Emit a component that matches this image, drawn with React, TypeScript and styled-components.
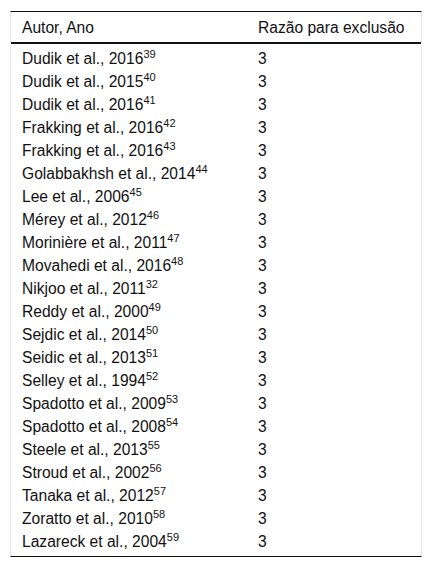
import React from 'react';
import styled, {createGlobalStyle} from "styled-components";

const rows: [string, string][] = [
    ['Dudik et al., 2016', '39'],
    ['Dudik et al., 2015', '40'],
    ['Dudik et al., 2016', '41'],
    ['Frakking et al., 2016', '42'],
    ['Frakking et al., 2016', '43'],
    ['Golabbakhsh et al., 2014', '44'],
    ['Lee et al., 2006', '45'],
    ['Mérey et al., 2012', '46'],
    ['Morinière et al., 2011', '47'],
    ['Movahedi et al., 2016', '48'],
    ['Nikjoo et al., 2011', '32'],
    ['Reddy et al., 2000', '49'],
    ['Sejdic et al., 2014', '50'],
    ['Seidic et al., 2013', '51'],
    ['Selley et al., 1994', '52'],
    ['Spadotto et al., 2009', '53'],
    ['Spadotto et al., 2008', '54'],
    ['Steele et al., 2013', '55'],
    ['Stroud et al., 2002', '56'],
    ['Tanaka et al., 2012', '57'],
    ['Zoratto et al., 2010', '58'],
    ['Lazareck et al., 2004', '59'],
];

export default function App() {
    return (
        <>
            <GlobalStyle/>
            <TableWrapper>
                <StyledTable>
                    <colgroup>
                        <col style={{width: '236px'}}/>
                        <col/>
                    </colgroup>
                    <thead>
                    <tr>
                        <HeadCell>Autor, Ano</HeadCell>
                        <HeadCell>Razão para exclusão</HeadCell>
                    </tr>
                    </thead>
                    <Body>
                    {rows.map(([author, ref], i) => (
                        <tr key={i}>
                            <Cell>{author}<Ref>{ref}</Ref></Cell>
                            <Cell>3</Cell>
                        </tr>
                    ))}
                    </Body>
                </StyledTable>
            </TableWrapper>
        </>
    );
}

const GlobalStyle = createGlobalStyle`
    body {
        margin: 0;
        background: #fff;
        font-family: 'Liberation Sans', Arial, sans-serif;
        color: #111;
    }
`

const TableWrapper = styled.div`
    margin: 11px 0 0 10px;
    width: 410px;
    border-left: 1px solid #e8e8e8;
    border-right: 1px solid #e8e8e8;
    border-top: 1px solid #111;
    border-bottom: 1px solid #111;
    padding-bottom: 3px;
`

const StyledTable = styled.table`
    width: 100%;
    table-layout: fixed;
    border-collapse: collapse;
    font-size: 15.6px;
    line-height: 23px;
`

const HeadCell = styled.th`
    text-align: left;
    font-weight: normal;
    padding: 4px 11px 3px;
    white-space: nowrap;
    border-bottom: 2px solid #111;
`

const Body = styled.tbody`
    tr:first-child td {
        padding-top: 3px;
    }
`

const Cell = styled.td`
    padding: 0 11px;
    height: 23px;
    white-space: nowrap;
`

const Ref = styled.sup`
    font-size: 11px;
    line-height: 0;
    vertical-align: 6px;
`
